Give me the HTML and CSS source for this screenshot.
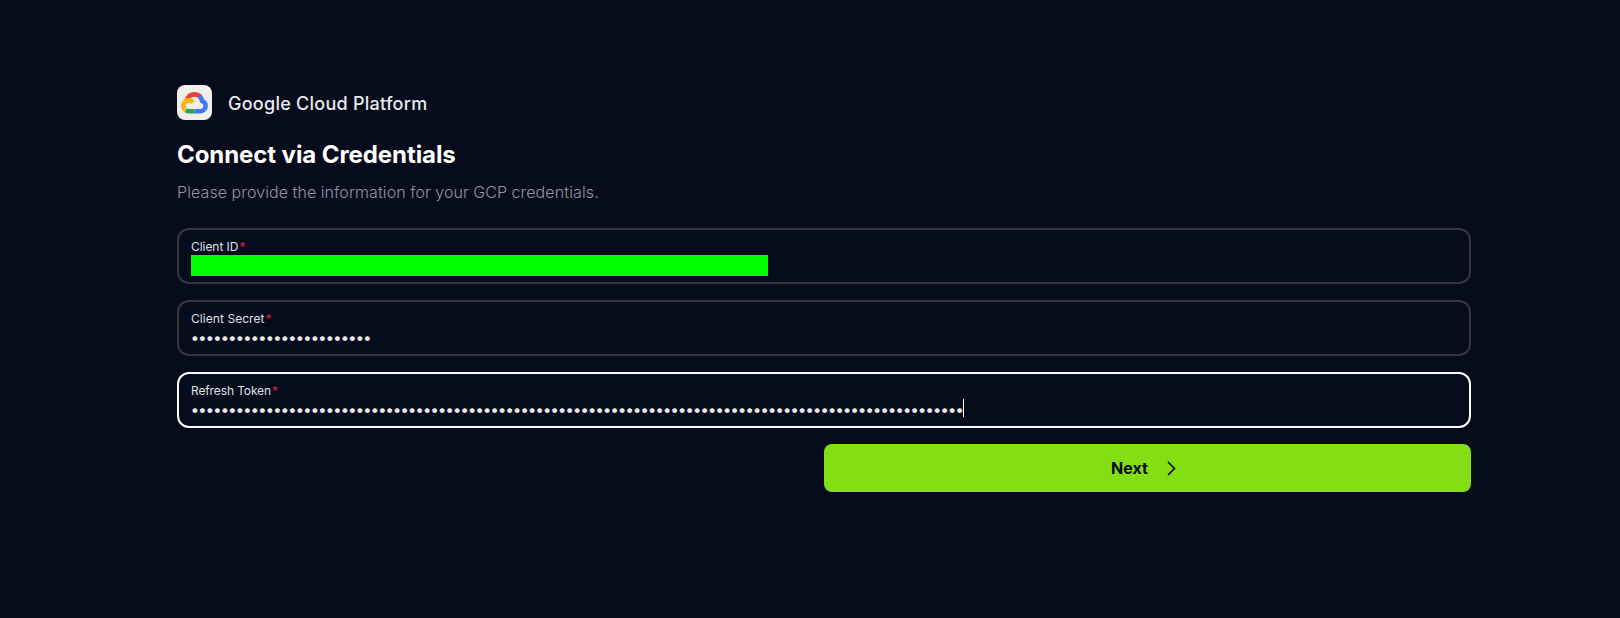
FILE: index.html
```html
<!DOCTYPE html>
<html lang="en">
<head>
<meta charset="utf-8">
<title>Connect via Credentials</title>
<link rel="stylesheet" href="styles.css">
</head>
<body>
<main class="page">
  <header class="provider">
    <span class="logo">
      <svg viewBox="0 0 27 22" width="27" height="22" fill="none" stroke-width="4.6">
        <path d="M5.600 8.400C6.800 4.500 10 2.400 13.600 2.400c2.600 0 4.600 1 6 2.700" stroke="#ea4335"/>
        <path d="M18.400 4.100c1.500 1.300 2.300 2.900 2.600 4.700 2.500.9 3.600 2.700 3.600 4.900 0 3.200-2.400 5.500-5.600 5.500h-5.500" stroke="#3b7cf5"/>
        <path d="M13.500 19.200H8.200c-1.300 0-2.400-.4-3.300-1.100" stroke="#2fa04f"/>
        <path d="M4.600 17.800C3 16.900 2.300 15.500 2.300 13.700c0-3.200 2.500-5.300 5.400-5.300 2 0 3.300.8 4.300 2.400" stroke="#fbb50b"/>
      </svg>
    </span>
    <span class="provider-name">Google Cloud Platform</span>
  </header>
  <h1 class="title">Connect via Credentials</h1>
  <p class="subtitle">Please provide the information for your GCP credentials.</p>
  <form class="form">
    <div class="field">
      <label class="label id">Client ID<span class="required">*</span></label>
      <div class="redacted"></div>
    </div>
    <div class="field">
      <label class="label secret">Client Secret<span class="required">*</span></label>
      <div class="value">••••••••••••••••••••••••</div>
    </div>
    <div class="field focused">
      <label class="label token">Refresh Token<span class="required">*</span></label>
      <div class="value">•••••••••••••••••••••••••••••••••••••••••••••••••••••••••••••••••••••••••••••••••••••••••••••••••••••••<span class="caret"></span></div>
    </div>
    <button class="next" type="button"><span class="next-text">Next</span>
      <svg width="9" height="15" viewBox="0 0 9 15" fill="none" stroke="#060b1c" stroke-width="1.700" stroke-linecap="round" stroke-linejoin="round"><path d="M1.500 1.500l6 6-6 6"/></svg>
    </button>
  </form>
</main>
</body>
</html>
```
FILE: styles.css
```css
* { box-sizing: border-box; }
body {
  margin: 0;
  min-height: 618px;
  background: #070c1d;
  color: #e8e9eb;
  font-family: Inter, "Liberation Sans", sans-serif;
}
.page { width: 1294px; margin-left: 177px; padding-top: 85px; }
.provider { display: flex; align-items: center; gap: 16px; height: 35px; }
.logo {
  display: flex; align-items: center; justify-content: center;
  width: 35px; height: 35px; border-radius: 8px; background: #f1efeb;
}
.provider-name { font-size: 18px; font-weight: 500; line-height: 24px; padding-top: 2px; letter-spacing: 0.26px; white-space: nowrap; }
.title { margin: 19px 0 0; font-size: 24px; font-weight: 650; line-height: 32px; letter-spacing: -0.08px; color: #fff; }
.subtitle { margin: 9px 0 0; font-size: 16px; font-weight: 300; line-height: 24px; letter-spacing: 0.12px; word-spacing: -0.3px; color: #94969c; }
.form { display: flex; flex-direction: column; gap: 16px; margin-top: 24px; }
.field { height: 56px; padding: 9px 12px 0; border: 2px solid #37373b; border-radius: 12px; }
.focused { border-color: #fff; }
.label { display: block; height: 16px; font-size: 12px; font-weight: 400; line-height: 16px; color: #dfe0e3; }
.id { letter-spacing: -0.05px; }
.secret { letter-spacing: 0.06px; }
.token { letter-spacing: -0.12px; }
.required { margin-left: 1px; color: #e01d48; }
.redacted { width: 577px; height: 21px; background: #00ff00; }
.value { display: flex; align-items: center; height: 20px; margin-left: -0.6px; font-size: 15.5px; letter-spacing: -1.22px; white-space: nowrap; }
.caret { width: 1px; height: 18px; margin: 0 0 2px 0.6px; background: #fff; }
.next {
  display: flex; align-items: center; justify-content: center; gap: 19px;
  align-self: flex-end; width: 647px; height: 48px; padding: 0 8px 0 0;
  border: 0; border-radius: 8px; background: #83df14; color: #060b1c;
  font: 700 16px Inter, "Liberation Sans", sans-serif;
}
```
